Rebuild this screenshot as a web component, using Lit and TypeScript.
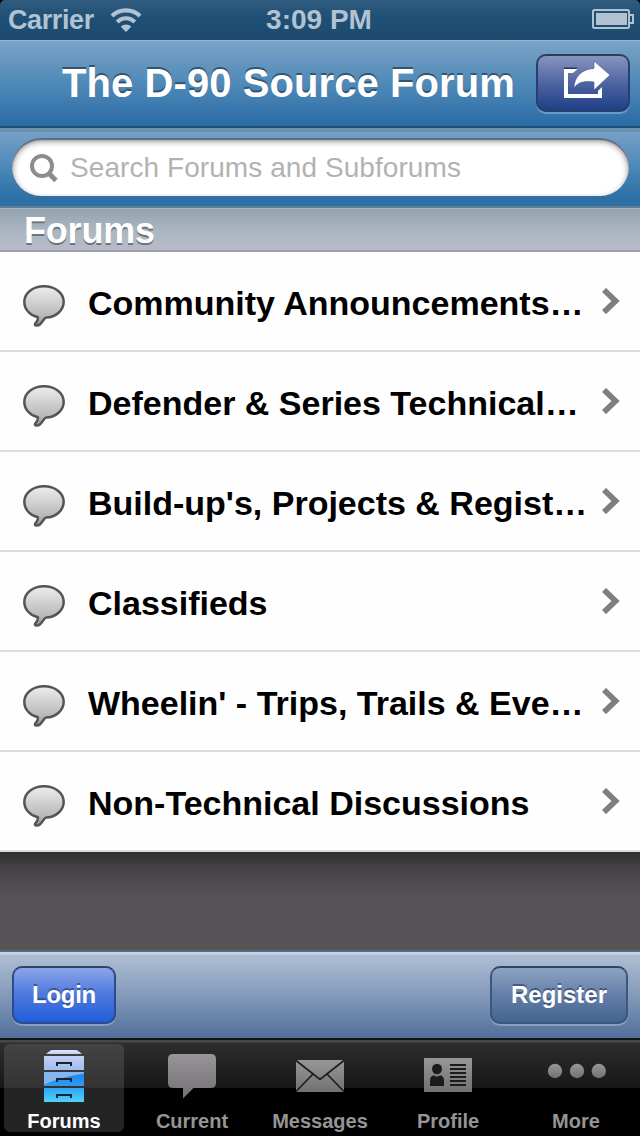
import { LitElement, html, css, svg } from "lit";
import { customElement, property, state } from "lit/decorators.js";

const FORUMS = [
  "Community Announcements…",
  "Defender & Series Technical…",
  "Build-up's, Projects & Regist…",
  "Classifieds",
  "Wheelin' - Trips, Trails & Eve…",
  "Non-Technical Discussions",
];

const TABS = ["Forums", "Current", "Messages", "Profile", "More"];

const greyFill = (id: string) => svg`
  <linearGradient id=${id} x1="0" y1="0" x2="0" y2="1">
    <stop offset="0" stop-color="#989698" /><stop offset="1" stop-color="#727072" />
  </linearGradient>`;

const TAB_ICONS: Record<string, unknown> = {
  Forums: html`<svg width="60" height="60" viewBox="0 0 60 60">
    <defs>
      <linearGradient id="lid" x1="0" y1="0" x2="0" y2="1">
        <stop offset="0" stop-color="#dde6fb" /><stop offset="1" stop-color="#c2d0f3" />
      </linearGradient>
      <linearGradient id="d1" x1="0" y1="0" x2="0" y2="1">
        <stop offset="0" stop-color="#c4d2f4" /><stop offset="1" stop-color="#9fbdee" />
      </linearGradient>
      <linearGradient id="d2" x1="0" y1="0" x2="0" y2="1">
        <stop offset="0" stop-color="#1f80ea" /><stop offset="1" stop-color="#2f9cf4" />
      </linearGradient>
      <linearGradient id="d3" x1="0" y1="0" x2="0" y2="1">
        <stop offset="0" stop-color="#2fa6f5" /><stop offset="1" stop-color="#4fd2fb" />
      </linearGradient>
    </defs>
    <path d="M12 6 L16 2.800 Q17 2 18.500 2 H41.500 Q43 2 44 2.800 L48 6 Z" fill="url(#lid)" />
    <rect x="10" y="8" width="40" height="14" fill="url(#d1)" />
    <rect x="10" y="24" width="40" height="14" fill="url(#d2)" />
    <path d="M10 24 H50 V25.500 Q28 29 10 36.500 Z" fill="#86b5f0" />
    <rect x="10" y="40" width="40" height="14" fill="url(#d3)" />
    <g fill="none" stroke="#1d222c" stroke-width="2">
      <path d="M23 18 V15 H37 V18" /><path d="M23 34 V31 H37 V34" /><path d="M23 50 V47 H37 V50" />
    </g>
  </svg>`,
  Current: html`<svg width="60" height="60" viewBox="0 0 60 60">
    <defs>${greyFill("gc")}</defs>
    <path d="M11 6 H49 Q54 6 54 11 V35 Q54 40 49 40 H31.500 L21 50.500 V40 H11 Q6 40 6 35 V11 Q6 6 11 6 Z" fill="url(#gc)" />
  </svg>`,
  Messages: html`<svg width="60" height="60" viewBox="0 0 60 60">
    <defs>${greyFill("gm")}</defs>
    <rect x="6" y="12" width="48" height="32" fill="url(#gm)" />
    <path d="M6 12.500 L30 31.500 L54 12.500 M6 43.500 L23 26 M54 43.500 L37 26" fill="none" stroke="#1b1b1c" stroke-width="1.6" />
  </svg>`,
  Profile: html`<svg width="60" height="60" viewBox="0 0 60 60">
    <defs>${greyFill("gp")}</defs>
    <rect x="6" y="10" width="48" height="34" fill="url(#gp)" />
    <g fill="#1b1b1c">
      <ellipse cx="19" cy="21" rx="5" ry="5.200" />
      <path d="M12 38 V33 Q12 27.500 16 27.500 Q19 29.500 22 27.500 Q26 27.500 26 33 V38 Z" />
      <path d="M32 16h16v2h-16z M32 20h16v2h-16z M32 24h16v2h-16z M32 28h16v2h-16z M32 32h16v2h-16z M32 36h16v2h-16z" />
    </g>
  </svg>`,
  More: html`<svg width="60" height="60" viewBox="0 0 60 60">
    <defs>${greyFill("gd")}</defs>
    <g fill="url(#gd)">
      <circle cx="9" cy="23" r="7.200" /><circle cx="31" cy="23" r="7.200" /><circle cx="52.800" cy="23" r="7.200" />
    </g>
  </svg>`,
};

@customElement("forum-row")
class ForumRow extends LitElement {
  @property() label = "";

  static styles = css`
    :host {
      display: flex;
      align-items: center;
      height: 98px;
      border-bottom: 2px solid #dcdcdc;
      padding-left: 22px;
      padding-right: 20px;
      background: #fefefe;
    }
    .bubble { flex: none; margin-top: 10px; }
    .label {
      flex: 1;
      min-width: 0;
      margin: 4px 0 0 22px;
      font-weight: bold;
      font-size: 34px;
      line-height: 40px;
      white-space: nowrap;
      color: #000;
    }
    .chevron { flex: none; margin-bottom: 1px; }
  `;

  render() {
    return html`
      <svg class="bubble" width="44" height="44" viewBox="0 0 44 44">
        <defs>
          <linearGradient id="b" x1="0" y1="0" x2="0" y2="1">
            <stop offset="0" stop-color="#ededed" /><stop offset=".75" stop-color="#b9b9b9" /><stop offset="1" stop-color="#989898" />
          </linearGradient>
        </defs>
        <path d="M22 2.300 C33 2.300 41.700 9 41.700 17.800 C41.700 26.400 34 33 24 33.600 C21.600 34.200 20.800 38.500 17.600 40.600 C15.400 42 12.900 41.600 12.900 40.400 C13.100 38.900 16.200 37.600 16 33.200 C8 31.500 2.300 25.500 2.300 17.800 C2.300 9 11 2.300 22 2.300 Z"
          fill="url(#b)" stroke="#545454" stroke-width="2.500" stroke-linejoin="round" />
      </svg>
      <div class="label">${this.label}</div>
      <svg class="chevron" width="18" height="26" viewBox="0 0 18 26">
        <path d="M2 2 L13.500 13 L2 24" fill="none" stroke="#7f7f7f" stroke-width="5.800" />
      </svg>
    `;
  }
}

@customElement("app-root")
class AppRoot extends LitElement {
  @state() private activeTab = "Forums";

  static styles = css`
    :host {
      display: flex;
      flex-direction: column;
      width: 640px;
      height: 1136px;
      overflow: hidden;
      background: #000;
      font-family: "Liberation Sans", Arial, Helvetica, sans-serif;
    }
    .status {
      flex: none;
      height: 40px;
      display: grid;
      grid-template-columns: 1fr auto 1fr;
      align-items: center;
      box-sizing: border-box;
      padding: 0 6px 0 8px;
      border-radius: 5px 5px 0 0;
      background: linear-gradient(#305c80, #1f4f74 45%, #1b4a6d);
      color: #b1c3d3;
      font-weight: bold;
      font-size: 28px;
      line-height: 38px;
    }
    .carrier { display: flex; align-items: center; gap: 16px; font-size: 27px; letter-spacing: -0.4px; }
    .clock { margin-right: 4px; }
    .battery { justify-self: end; display: flex; margin-bottom: 2px; }
    .nav {
      flex: none;
      height: 88px;
      box-sizing: border-box;
      display: flex;
      align-items: center;
      justify-content: space-between;
      padding: 0 10px 0 62px;
      border-top: 1px solid #8fbbdb;
      border-bottom: 2px solid #1c4f78;
      background: linear-gradient(#7aa3c6, #4f89b7 50%, #2a6ca8);
    }
    .title {
      font-size: 40px;
      line-height: 46px;
      font-weight: bold;
      letter-spacing: 0.08px;
      margin-bottom: 2px;
      white-space: nowrap;
      color: #fff;
      text-shadow: 0 -2px 0 #34546e;
    }
    .share {
      width: 94px;
      height: 58px;
      box-sizing: border-box;
      display: flex;
      align-items: center;
      justify-content: center;
      padding: 0 0 6px 8px;
      margin-bottom: 2px;
      border: 2px solid #26406f;
      border-top-color: #2b3d5a;
      border-radius: 10px;
      background: linear-gradient(#8794bd, #4f64a2 50%, #1f3f86);
      box-shadow: 0 2px 0 rgba(150, 180, 210, 0.6);
    }
    .share svg { flex: none; }
    .search {
      flex: none;
      height: 80px;
      box-sizing: border-box;
      padding: 6px 11px 0 12px;
      border-top: 4px solid #6c93ad;
      border-bottom: 2px solid #5c7f98;
      background: linear-gradient(#76a1c8, #4a86b6 50%, #2c70a6 90%);
    }
    .field {
      height: 58px;
      box-sizing: border-box;
      display: flex;
      align-items: center;
      gap: 12px;
      padding: 2px 18px 0 16px;
      border-radius: 29px;
      background: #fff;
      box-shadow: inset 0 2px 1px #5b6c80, inset 0 3px 6px rgba(60, 45, 60, 0.6);
      color: #b2b2b2;
      font-size: 28px;
      line-height: 34px;
      letter-spacing: 0.07px;
    }
    .section {
      flex: none;
      height: 44px;
      box-sizing: border-box;
      padding-left: 24px;
      border-bottom: 2px solid #9a9dac;
      border-top: 1px solid #a5b4bf;
      background: linear-gradient(#94a4ae, #abb7c0 55%, #b9bac8);
      color: #fff;
      font-size: 36px;
      line-height: 43px;
      letter-spacing: -0.2px;
      font-weight: bold;
      text-shadow: 0 2px 0 #6b757e;
    }
    .backdrop {
      flex: 1;
      background: linear-gradient(#2e2d2f, #434143 15%, #555355 45%, #565456);
    }
    .toolbar {
      flex: none;
      height: 88px;
      box-sizing: border-box;
      display: flex;
      align-items: center;
      justify-content: space-between;
      padding: 0 12px 0 12px;
      border-top: 2px solid #57697f;
      background: linear-gradient(#c6d4e4 2px, #aebfd4 3px, #849ab9 50%, #516f9c);
    }
    .button {
      width: 138px;
      height: 58px;
      box-sizing: border-box;
      text-align: center;
      border: 2px solid #3b567f;
      border-top-color: #2f4362;
      border-radius: 10px;
      background: linear-gradient(#8ea3c2, #647fa9 50%, #44638f);
      box-shadow: 0 2px 0 rgba(170, 190, 215, 0.55);
      color: #fff;
      font-size: 24px;
      line-height: 54px;
      font-weight: bold;
      text-shadow: 0 -2px 0 rgba(30, 50, 90, 0.55);
    }
    .primary {
      width: 104px;
      letter-spacing: -0.3px;
      border-color: #2c4a8c;
      border-top-color: #2f4362;
      background: linear-gradient(#8aa5ea, #4c78dc 50%, #225edc);
    }
    .tabs {
      flex: none;
      height: 98px;
      box-sizing: border-box;
      display: grid;
      grid-template-columns: repeat(5, 1fr);
      border-top: 2px solid #111418;
      background: linear-gradient(#484848 2px, #2e2e2e 3px, #161616 48px, #000 48px);
    }
    .tab {
      display: flex;
      flex-direction: column;
      align-items: center;
      height: 88px;
      box-sizing: border-box;
      margin: 4px;
      padding-top: 4px;
      border-radius: 6px;
      color: #969496;
      font-size: 20px;
      font-weight: bold;
      line-height: 24px;
    }
    .tab svg { flex: none; }
    .active {
      color: #fff;
      background: linear-gradient(#434343, #333 44px, #242424 44px, #242424);
    }
    .caption { margin-top: 1px; }
  `;

  render() {
    return html`
      <div class="status">
        <div class="carrier">
          <span>Carrier</span>
          <svg width="32" height="26" viewBox="0 0 32 26">
            <g fill="none" stroke="#b1c3d3" stroke-width="4.200">
              <path d="M2 9 C9.500 1.500 22.500 1.500 30 9" />
              <path d="M7.200 15 C12.200 10 19.800 10 24.800 15" />
            </g>
            <path d="M16 25 L10.800 19.700 C13.600 16.900 18.400 16.900 21.200 19.700 Z" fill="#b1c3d3" />
          </svg>
        </div>
        <div class="clock">3:09 PM</div>
        <div class="battery">
          <svg width="42" height="20" viewBox="0 0 42 20">
            <rect x="1" y="1" width="36" height="18" rx="1.500" fill="none" stroke="#b1c3d3" stroke-width="2" />
            <rect x="4" y="4" width="31" height="12" fill="#b1c3d3" />
            <path d="M38 6 H41 V14 H38" fill="none" stroke="#b1c3d3" stroke-width="2" />
          </svg>
        </div>
      </div>

      <div class="nav">
        <div class="title">The D-90 Source Forum</div>
        <div class="share">
          <svg width="48" height="38" viewBox="0 0 48 38">
            <path d="M14.500 6.500 H1 V12 H10 Z" fill="#25335c" />
            <path d="M14.500 8 H1 V37 H39 V26 L35 30 V33 H5 V12 H10 Z" fill="#fff" />
            <path d="M31 0 L47 14 L31 29 V21 C22 19.500 15 21 11 27 C11 16 19 8 31 7.500 Z" fill="#fff" stroke="#4a5788" stroke-width=".6" />
          </svg>
        </div>
      </div>

      <div class="search">
        <div class="field">
          <svg width="30" height="32" viewBox="0 0 30 32">
            <circle cx="14" cy="14" r="10" fill="none" stroke="#8c8c90" stroke-width="4" />
            <path d="M20 20.500 L28 28.500" stroke="#8c8c90" stroke-width="5" />
          </svg>
          <span>Search Forums and Subforums</span>
        </div>
      </div>

      <div class="section">Forums</div>
      ${FORUMS.map((f) => html`<forum-row .label=${f}></forum-row>`)}
      <div class="backdrop"></div>

      <div class="toolbar">
        <div class="button primary">Login</div>
        <div class="button">Register</div>
      </div>

      <div class="tabs">
        ${TABS.map(
          (t) => html`<div class="tab ${t === this.activeTab ? "active" : ""}" @click=${() => (this.activeTab = t)}>
            ${TAB_ICONS[t]}
            <span class="caption">${t}</span>
          </div>`
        )}
      </div>
    `;
  }
}
